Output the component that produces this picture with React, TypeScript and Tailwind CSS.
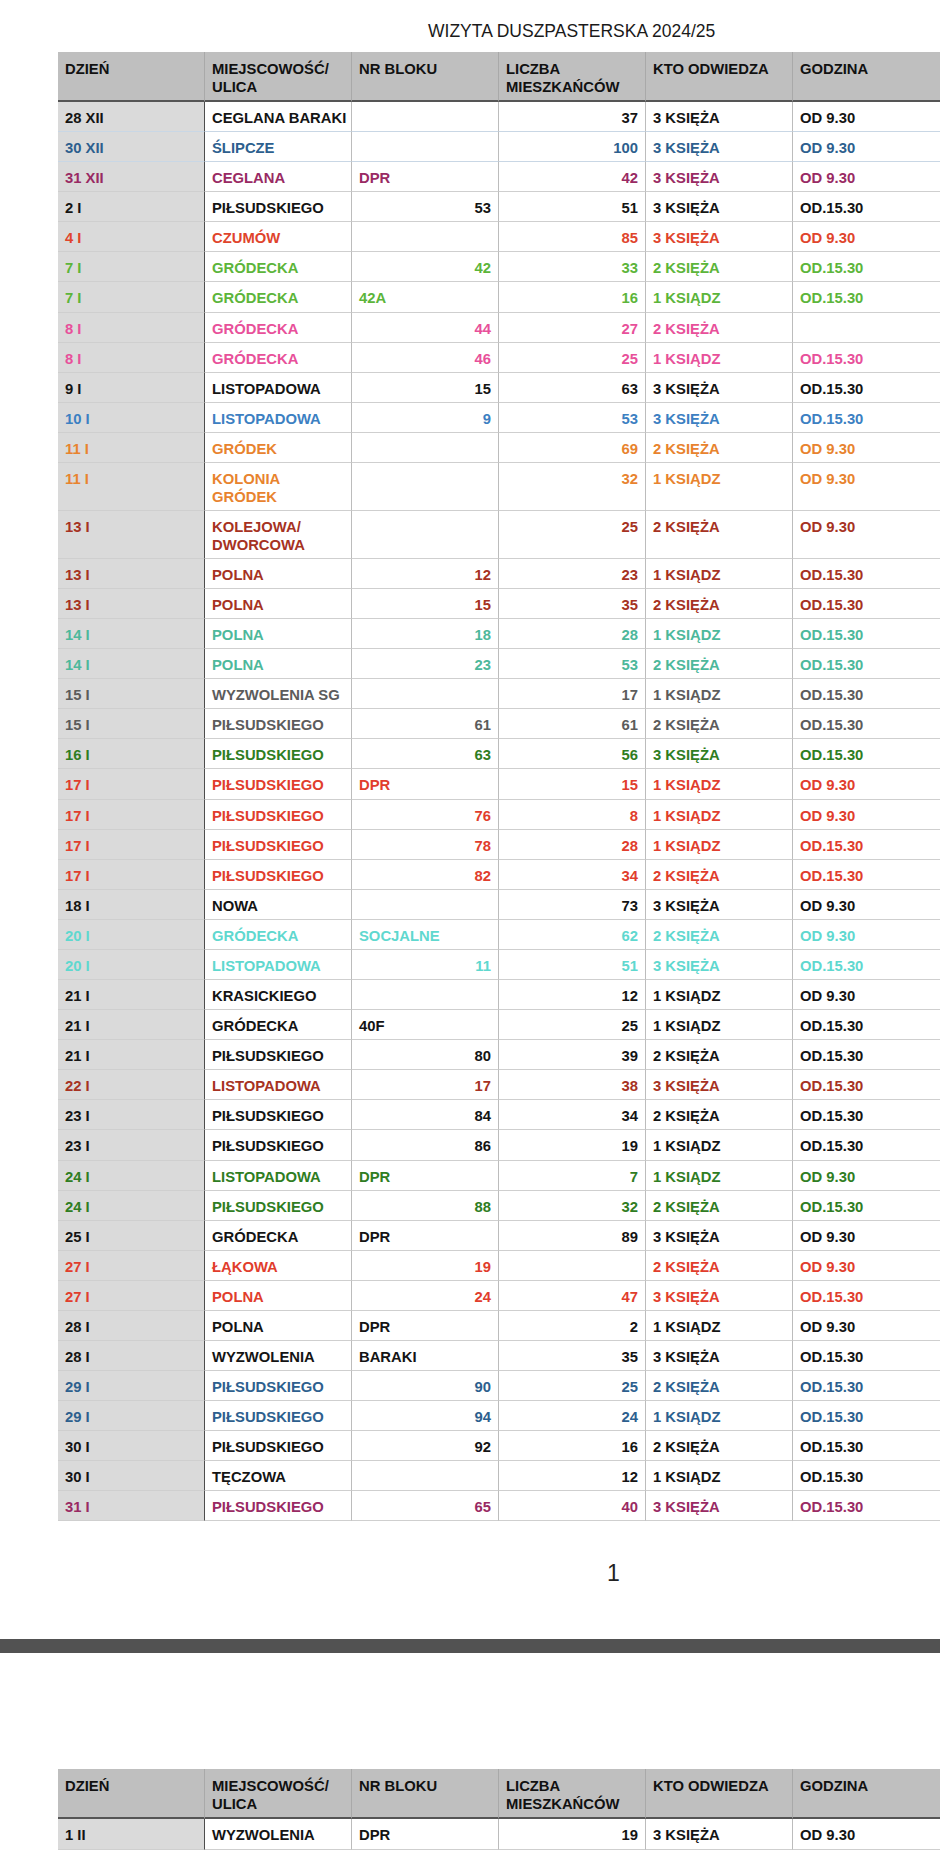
import React from "react";

type Row = {
  d: string;
  m: string;
  n?: string;
  l?: string;
  k: string;
  g?: string;
  c: string;
  two?: boolean;
  bb?: string;
};

const BLACK = "text-[#141414]";
const BLUE = "text-[#2d5f8e]";
const PURPLE = "text-[#992a63]";
const CZ = "text-[#e0442c]";
const LGREEN = "text-[#5cb53a]";
const PINK = "text-[#e8509a]";
const BLUE2 = "text-[#3c80c2]";
const ORANGE = "text-[#e8832e]";
const DRED = "text-[#a63222]";
const TEAL = "text-[#4db89b]";
const GRAY = "text-[#5c5c5c]";
const DGREEN = "text-[#2f7d22]";
const RED = "text-[#e13d2c]";
const CYAN = "text-[#5fd8cf]";

const rows: Row[] = [
  { d: "28 XII", m: "CEGLANA BARAKI", l: "37", k: "3 KSIĘŻA", g: "OD 9.30", c: BLACK, bb: "border-b-[#c9d7e5]" },
  { d: "30 XII", m: "ŚLIPCZE", l: "100", k: "3 KSIĘŻA", g: "OD 9.30", c: BLUE, bb: "border-b-[#c9d7e5]" },
  { d: "31 XII", m: "CEGLANA", n: "DPR", l: "42", k: "3 KSIĘŻA", g: "OD 9.30", c: PURPLE },
  { d: "2 I", m: "PIŁSUDSKIEGO", n: "53", l: "51", k: "3 KSIĘŻA", g: "OD.15.30", c: BLACK },
  { d: "4 I", m: "CZUMÓW", l: "85", k: "3 KSIĘŻA", g: "OD 9.30", c: CZ },
  { d: "7 I", m: "GRÓDECKA", n: "42", l: "33", k: "2 KSIĘŻA", g: "OD.15.30", c: LGREEN },
  { d: "7 I", m: "GRÓDECKA", n: "42A", l: "16", k: "1 KSIĄDZ", g: "OD.15.30", c: LGREEN },
  { d: "8 I", m: "GRÓDECKA", n: "44", l: "27", k: "2 KSIĘŻA", c: PINK },
  { d: "8 I", m: "GRÓDECKA", n: "46", l: "25", k: "1 KSIĄDZ", g: "OD.15.30", c: PINK },
  { d: "9 I", m: "LISTOPADOWA", n: "15", l: "63", k: "3 KSIĘŻA", g: "OD.15.30", c: BLACK },
  { d: "10 I", m: "LISTOPADOWA", n: "9", l: "53", k: "3 KSIĘŻA", g: "OD.15.30", c: BLUE2 },
  { d: "11 I", m: "GRÓDEK", l: "69", k: "2 KSIĘŻA", g: "OD 9.30", c: ORANGE },
  { d: "11 I", m: "KOLONIA GRÓDEK", l: "32", k: "1 KSIĄDZ", g: "OD 9.30", c: ORANGE, two: true },
  { d: "13 I", m: "KOLEJOWA/ DWORCOWA", l: "25", k: "2 KSIĘŻA", g: "OD 9.30", c: DRED, two: true },
  { d: "13 I", m: "POLNA", n: "12", l: "23", k: "1 KSIĄDZ", g: "OD.15.30", c: DRED },
  { d: "13 I", m: "POLNA", n: "15", l: "35", k: "2 KSIĘŻA", g: "OD.15.30", c: DRED },
  { d: "14 I", m: "POLNA", n: "18", l: "28", k: "1 KSIĄDZ", g: "OD.15.30", c: TEAL },
  { d: "14 I", m: "POLNA", n: "23", l: "53", k: "2 KSIĘŻA", g: "OD.15.30", c: TEAL },
  { d: "15 I", m: "WYZWOLENIA SG", l: "17", k: "1 KSIĄDZ", g: "OD.15.30", c: GRAY },
  { d: "15 I", m: "PIŁSUDSKIEGO", n: "61", l: "61", k: "2 KSIĘŻA", g: "OD.15.30", c: GRAY },
  { d: "16 I", m: "PIŁSUDSKIEGO", n: "63", l: "56", k: "3 KSIĘŻA", g: "OD.15.30", c: DGREEN },
  { d: "17 I", m: "PIŁSUDSKIEGO", n: "DPR", l: "15", k: "1 KSIĄDZ", g: "OD 9.30", c: RED },
  { d: "17 I", m: "PIŁSUDSKIEGO", n: "76", l: "8", k: "1 KSIĄDZ", g: "OD 9.30", c: RED },
  { d: "17 I", m: "PIŁSUDSKIEGO", n: "78", l: "28", k: "1 KSIĄDZ", g: "OD.15.30", c: RED },
  { d: "17 I", m: "PIŁSUDSKIEGO", n: "82", l: "34", k: "2 KSIĘŻA", g: "OD.15.30", c: RED },
  { d: "18 I", m: "NOWA", l: "73", k: "3 KSIĘŻA", g: "OD 9.30", c: BLACK },
  { d: "20 I", m: "GRÓDECKA", n: "SOCJALNE", l: "62", k: "2 KSIĘŻA", g: "OD 9.30", c: CYAN },
  { d: "20 I", m: "LISTOPADOWA", n: "11", l: "51", k: "3 KSIĘŻA", g: "OD.15.30", c: CYAN },
  { d: "21 I", m: "KRASICKIEGO", l: "12", k: "1 KSIĄDZ", g: "OD 9.30", c: BLACK },
  { d: "21 I", m: "GRÓDECKA", n: "40F", l: "25", k: "1 KSIĄDZ", g: "OD.15.30", c: BLACK },
  { d: "21 I", m: "PIŁSUDSKIEGO", n: "80", l: "39", k: "2 KSIĘŻA", g: "OD.15.30", c: BLACK },
  { d: "22 I", m: "LISTOPADOWA", n: "17", l: "38", k: "3 KSIĘŻA", g: "OD.15.30", c: DRED },
  { d: "23 I", m: "PIŁSUDSKIEGO", n: "84", l: "34", k: "2 KSIĘŻA", g: "OD.15.30", c: BLACK },
  { d: "23 I", m: "PIŁSUDSKIEGO", n: "86", l: "19", k: "1 KSIĄDZ", g: "OD.15.30", c: BLACK },
  { d: "24 I", m: "LISTOPADOWA", n: "DPR", l: "7", k: "1 KSIĄDZ", g: "OD 9.30", c: DGREEN },
  { d: "24 I", m: "PIŁSUDSKIEGO", n: "88", l: "32", k: "2 KSIĘŻA", g: "OD.15.30", c: DGREEN },
  { d: "25 I", m: "GRÓDECKA", n: "DPR", l: "89", k: "3 KSIĘŻA", g: "OD 9.30", c: BLACK },
  { d: "27 I", m: "ŁĄKOWA", n: "19", k: "2 KSIĘŻA", g: "OD 9.30", c: RED },
  { d: "27 I", m: "POLNA", n: "24", l: "47", k: "3 KSIĘŻA", g: "OD.15.30", c: RED },
  { d: "28 I", m: "POLNA", n: "DPR", l: "2", k: "1 KSIĄDZ", g: "OD 9.30", c: BLACK },
  { d: "28 I", m: "WYZWOLENIA", n: "BARAKI", l: "35", k: "3 KSIĘŻA", g: "OD.15.30", c: BLACK },
  { d: "29 I", m: "PIŁSUDSKIEGO", n: "90", l: "25", k: "2 KSIĘŻA", g: "OD.15.30", c: BLUE },
  { d: "29 I", m: "PIŁSUDSKIEGO", n: "94", l: "24", k: "1 KSIĄDZ", g: "OD.15.30", c: BLUE },
  { d: "30 I", m: "PIŁSUDSKIEGO", n: "92", l: "16", k: "2 KSIĘŻA", g: "OD.15.30", c: BLACK },
  { d: "30 I", m: "TĘCZOWA", l: "12", k: "1 KSIĄDZ", g: "OD.15.30", c: BLACK },
  { d: "31 I", m: "PIŁSUDSKIEGO", n: "65", l: "40", k: "3 KSIĘŻA", g: "OD.15.30", c: PURPLE },
];

const rows2: Row[] = [
  { d: "1 II", m: "WYZWOLENIA", n: "DPR", l: "19", k: "3 KSIĘŻA", g: "OD 9.30", c: BLACK },
];

function Header() {
  const cell = "h-[50px] pt-[8px] px-[7px] leading-[18px] border-b-2 border-b-[#555555] border-r border-r-[#a9a9a9]";
  return (
    <div className="grid grid-cols-[147px_147px_147px_147px_147px_147px] bg-[#bfbfbf] font-bold text-[#111111]">
      <div className={cell}>DZIEŃ</div>
      <div className={cell}>
        MIEJSCOWOŚĆ/
        <br />
        ULICA
      </div>
      <div className={cell}>NR BLOKU</div>
      <div className={cell}>
        LICZBA
        <br />
        MIESZKAŃCÓW
      </div>
      <div className={cell}>KTO ODWIEDZA</div>
      <div className="h-[50px] pt-[8px] px-[7px] leading-[18px] border-b-2 border-b-[#555555]">GODZINA</div>
    </div>
  );
}

function BodyRow({ r }: { r: Row }) {
  const h = r.two ? "h-[48px]" : "h-[30.08px]";
  const bb = r.bb ?? "border-b-[#cfcfcf]";
  const base = `${h} pt-[7px] px-[7px] leading-[18px] border-b ${bb}`;
  const isNum = (v?: string) => !!v && /^\d+$/.test(v);
  return (
    <div className={`grid grid-cols-[147px_147px_147px_147px_147px_147px] font-bold ${r.c}`}>
      <div className={`${base} bg-[#dadada] border-r-[1.5px] border-r-[#4d4d4d] whitespace-nowrap`}>{r.d}</div>
      <div className={`${base} bg-white border-r border-r-[#bcbcbc]`}>
        {r.two ? (
          <>
            {r.m.split(" ")[0]}
            <br />
            {r.m.split(" ")[1]}
          </>
        ) : (
          <span className="whitespace-nowrap">{r.m}</span>
        )}
      </div>
      <div className={`${base} bg-white border-r border-r-[#bcbcbc] ${isNum(r.n) ? "text-right" : "text-left"}`}>
        {r.n ?? ""}
      </div>
      <div className={`${base} bg-white border-r border-r-[#bcbcbc] text-right`}>{r.l ?? ""}</div>
      <div className={`${base} bg-white border-r border-r-[#bcbcbc] whitespace-nowrap`}>{r.k}</div>
      <div className={`${base} bg-white whitespace-nowrap`}>{r.g ?? ""}</div>
    </div>
  );
}

function Table({ data }: { data: Row[] }) {
  return (
    <div className="ml-[58px] w-[882px] text-[14.8px]">
      <Header />
      {data.map((r, i) => (
        <BodyRow key={i} r={r} />
      ))}
    </div>
  );
}

export default function App() {
  return (
    <div
      className="w-[940px] min-h-[1856px] bg-white overflow-hidden"
      style={{ fontFamily: '"Liberation Sans", Arial, Helvetica, sans-serif' }}
    >
      <div className="pt-[21px] pb-[11px] pl-[428px] text-[17.5px] leading-[20px] text-[#1a1a1a] whitespace-nowrap">
        WIZYTA DUSZPASTERSKA 2024/25
      </div>
      <Table data={rows} />
      <div className="mt-[39px] pl-[607px] text-[23px] leading-[26px] text-[#222222]">1</div>
      <div className="mt-[53px] h-[14px] w-full bg-[#525252]" />
      <div className="mt-[116px]">
        <Table data={rows2} />
      </div>
    </div>
  );
}
